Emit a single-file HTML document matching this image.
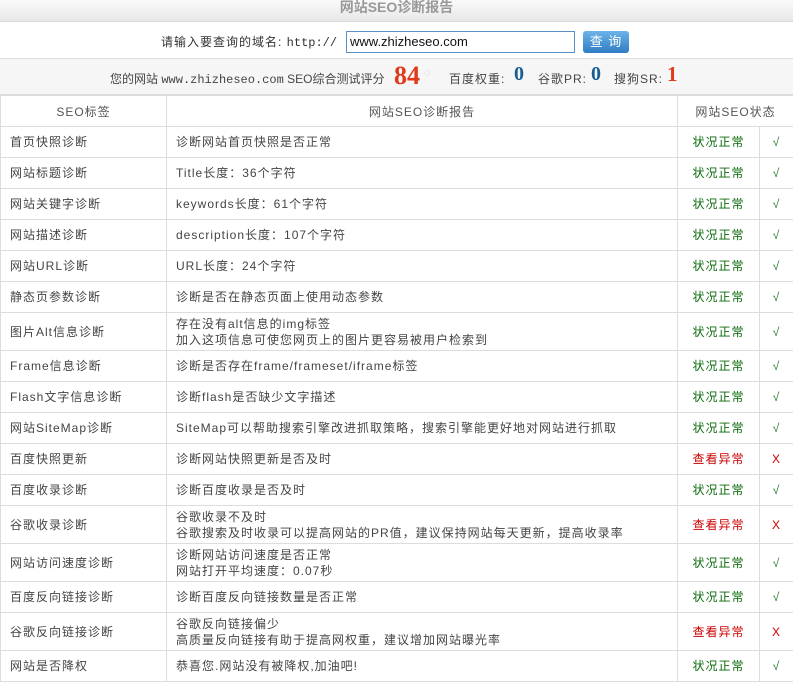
<!DOCTYPE html>
<html><head><meta charset="utf-8"><style>
body{margin:0;width:793px;height:676px;overflow:hidden;background:#fff;font-family:"Liberation Sans","WenQuanYi Zen Hei","Noto Sans CJK SC",sans-serif;font-size:12px;color:#444;letter-spacing:1px}
.t{height:21px;background:linear-gradient(#fafafa,#e8e8e8);border-bottom:1px solid #d8d8d8;text-align:center;font-size:14px;font-weight:bold;color:#999;line-height:14px;overflow:hidden;letter-spacing:0}
.r1{height:36px;border-bottom:1px solid #ddd;position:relative}
.r2{height:35px;background:#f6f6f6;border-bottom:1px solid #ddd;position:relative}
table{border-collapse:collapse;width:793px;table-layout:fixed}
td{border:1px solid #ddd;padding:0 0 0 9px;line-height:16px;height:30px;white-space:nowrap;overflow:hidden}
td.d{height:37px}
th{border:1px solid #ddd;font-weight:normal;height:30px;padding:0;color:#555}
.g{color:#0a6a0a;text-align:center;padding:0}
.e{color:#c00;text-align:center;padding:0}
.c{color:#2a7a2a;text-align:center;padding:0;font-style:italic}
.x{color:#c00;text-align:center;padding:0}
</style></head><body>
<div class="t">网站SEO诊断报告</div>
<div class="r1">
<span style="position:absolute;left:161px;top:11px;color:#333">请输入要查询的域名: <span style="font-family:'Liberation Mono',monospace;letter-spacing:0">http://</span></span>
<div style="position:absolute;left:346px;top:9px;width:224px;height:20px;border:1px solid #5a8fc8;font-size:13px;line-height:20px;padding-left:3px;color:#111;letter-spacing:0">www.zhizheseo.com</div>
<div style="position:absolute;left:583px;top:9px;width:46px;height:22px;border-radius:3px;background:linear-gradient(#6db3e8,#2f7cc4);color:#fff;text-align:center;line-height:22px;font-size:13px">查 询</div>
</div>
<div class="r2">
<span style="position:absolute;left:110px;top:11px;color:#444;letter-spacing:0">您的网站 <span style="font-family:'Liberation Mono',monospace">www.zhizheseo.com</span> SEO综合测试评分</span>
<span style="position:absolute;left:394px;top:2px;font-family:'Liberation Serif',serif;font-size:26px;font-weight:bold;color:#e03a1a;letter-spacing:0">84</span>
<span style="position:absolute;left:424px;top:8px;color:#bcd;font-size:11px">◌</span>
<span style="position:absolute;left:449px;top:11px">百度权重:</span>
<span style="position:absolute;left:514px;top:4px;font-family:'Liberation Serif',serif;font-size:20px;font-weight:bold;color:#1a5c96">0</span>
<span style="position:absolute;left:538px;top:11px">谷歌PR:</span>
<span style="position:absolute;left:591px;top:4px;font-family:'Liberation Serif',serif;font-size:20px;font-weight:bold;color:#1a5c96">0</span>
<span style="position:absolute;left:614px;top:11px">搜狗SR:</span>
<span style="position:absolute;left:667px;top:3px;font-family:'Liberation Serif',serif;font-size:21px;font-weight:bold;color:#e03a1a">1</span>
</div>
<table>
<colgroup><col style="width:166px"><col style="width:511px"><col style="width:82px"><col style="width:34px"></colgroup>
<tr><th>SEO标签</th><th>网站SEO诊断报告</th><th colspan="2">网站SEO状态</th></tr>
<tr><td>首页快照诊断</td><td>诊断网站首页快照是否正常</td><td class="g">状况正常</td><td class="c">√</td></tr>
<tr><td>网站标题诊断</td><td>Title长度：36个字符</td><td class="g">状况正常</td><td class="c">√</td></tr>
<tr><td>网站关键字诊断</td><td>keywords长度：61个字符</td><td class="g">状况正常</td><td class="c">√</td></tr>
<tr><td>网站描述诊断</td><td>description长度：107个字符</td><td class="g">状况正常</td><td class="c">√</td></tr>
<tr><td>网站URL诊断</td><td>URL长度：24个字符</td><td class="g">状况正常</td><td class="c">√</td></tr>
<tr><td>静态页参数诊断</td><td>诊断是否在静态页面上使用动态参数</td><td class="g">状况正常</td><td class="c">√</td></tr>
<tr><td class="d">图片Alt信息诊断</td><td class="d">存在没有alt信息的img标签<br>加入这项信息可使您网页上的图片更容易被用户检索到</td><td class="g">状况正常</td><td class="c">√</td></tr>
<tr><td>Frame信息诊断</td><td>诊断是否存在frame/frameset/iframe标签</td><td class="g">状况正常</td><td class="c">√</td></tr>
<tr><td>Flash文字信息诊断</td><td>诊断flash是否缺少文字描述</td><td class="g">状况正常</td><td class="c">√</td></tr>
<tr><td>网站SiteMap诊断</td><td>SiteMap可以帮助搜索引擎改进抓取策略，搜索引擎能更好地对网站进行抓取</td><td class="g">状况正常</td><td class="c">√</td></tr>
<tr><td>百度快照更新</td><td>诊断网站快照更新是否及时</td><td class="e">查看异常</td><td class="x">X</td></tr>
<tr><td>百度收录诊断</td><td>诊断百度收录是否及时</td><td class="g">状况正常</td><td class="c">√</td></tr>
<tr><td class="d">谷歌收录诊断</td><td class="d">谷歌收录不及时<br>谷歌搜索及时收录可以提高网站的PR值，建议保持网站每天更新，提高收录率</td><td class="e">查看异常</td><td class="x">X</td></tr>
<tr><td class="d">网站访问速度诊断</td><td class="d">诊断网站访问速度是否正常<br>网站打开平均速度：0.07秒</td><td class="g">状况正常</td><td class="c">√</td></tr>
<tr><td>百度反向链接诊断</td><td>诊断百度反向链接数量是否正常</td><td class="g">状况正常</td><td class="c">√</td></tr>
<tr><td class="d">谷歌反向链接诊断</td><td class="d">谷歌反向链接偏少<br>高质量反向链接有助于提高网权重，建议增加网站曝光率</td><td class="e">查看异常</td><td class="x">X</td></tr>
<tr><td>网站是否降权</td><td>恭喜您.网站没有被降权,加油吧!</td><td class="g">状况正常</td><td class="c">√</td></tr>
</table>
</body></html>
